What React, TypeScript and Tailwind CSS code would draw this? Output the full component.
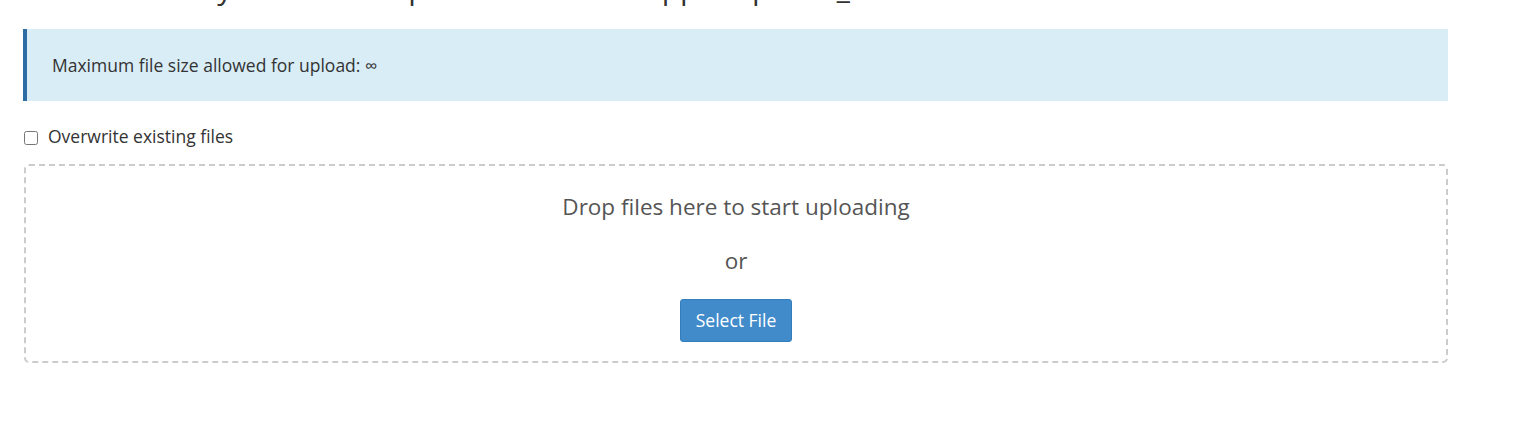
import React from "react";

export default function App() {
  return (
    <div className="min-h-[427px] bg-white font-['Open_Sans',sans-serif] text-[#333]">
      <div className="ml-[23px] w-[1425px]">
        {/* Page heading, scrolled mostly out of view */}
        <div className="h-[9px] overflow-hidden">
          <h1 className="-mt-[30px] text-[30px] leading-[36px] font-normal text-[#333] whitespace-nowrap">
            Select the file you want to upload to “/home/applab/public_html”.
          </h1>
        </div>

        {/* Info alert */}
        <div className="mt-[20px] h-[72px] flex items-center border-l-[4px] border-[#2e6da4] bg-[#d9edf7] pl-[25px] text-[17.5px] text-[#333]">
          Maximum file size allowed for upload: ∞
        </div>

        {/* Overwrite option */}
        <label className="mt-[22px] h-[26px] flex items-center gap-[10px] text-[17.5px] text-[#333]">
          <input type="checkbox" className="ml-[1px] w-[14px] h-[14px] mt-[4px]" />
          Overwrite existing files
        </label>

        {/* Drop zone */}
        <div className="mt-[15px] ml-[1px] w-[1424px] h-[199px] rounded-[5px] border-2 border-dashed border-[#ccc] flex flex-col items-center">
          <p className="mt-[23px] text-[22.5px] leading-[36px] text-[#555]">Drop files here to start uploading</p>
          <p className="mt-[18px] text-[22.5px] leading-[36px] text-[#555]">or</p>
          <button className="mt-[20px] w-[112px] h-[43px] rounded-[3px] border border-[#357ebd] bg-[#428bca] text-[17.5px] text-white">
            Select File
          </button>
        </div>
      </div>
    </div>
  );
}
